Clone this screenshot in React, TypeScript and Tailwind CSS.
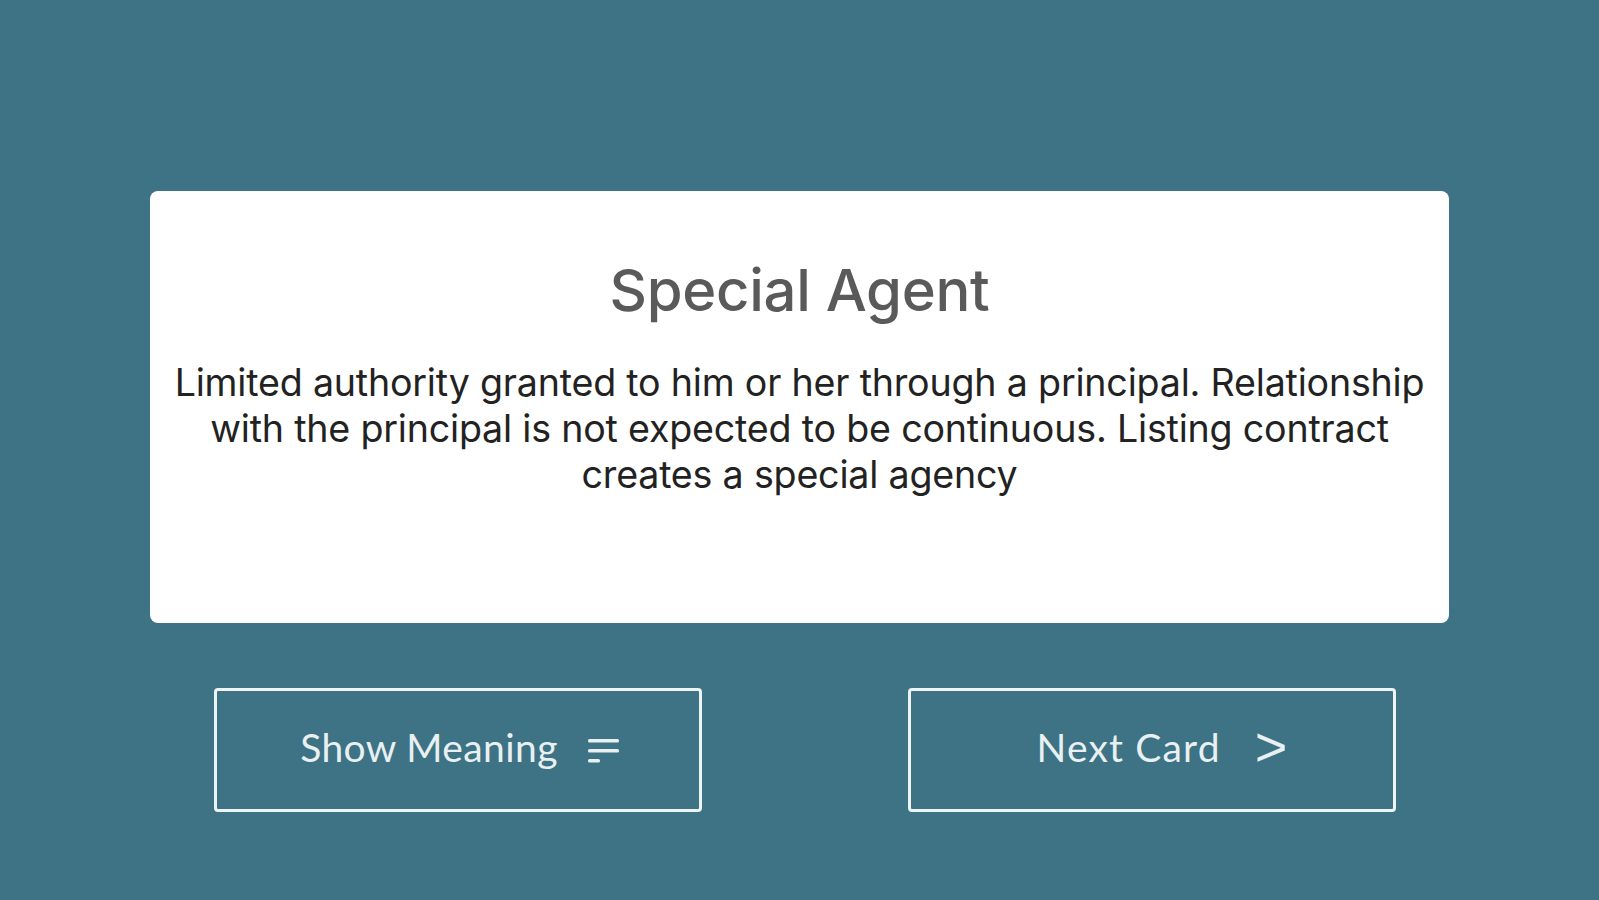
import React from "react";

export default function App() {
  return (
    <div className="min-h-screen w-full bg-[#3d7385] flex flex-col items-center pt-[191px]">
      <div className="w-[1299px] h-[432px] bg-white rounded-[8px] pt-[70px] px-[10px] text-center" style={{ fontFamily: "Inter, 'Liberation Sans', sans-serif" }}>
        <h1 className="text-[58px] leading-none text-[#5a5a5a] font-medium tracking-[-0.005em]">Special Agent</h1>
        <p className="mt-[41px] text-[37.6px] leading-[46px] text-[#222222] tracking-[-0.005em]">
          Limited authority granted to him or her through a principal. Relationship with the principal is not expected to be continuous. Listing contract creates a special agency
        </p>
      </div>
      <div className="w-[1299px] flex pl-[64px] gap-[206px] mt-[65px]" style={{ fontFamily: "Lato, 'Open Sans', sans-serif" }}>
        <button className="w-[488px] h-[124px] border-[3.5px] border-[#eef3f5] rounded-[4px] flex items-center justify-center text-[39px] text-[#e9f0f2] pb-[6px] pl-[4px]">
          <span className="tracking-[0.01em]">Show Meaning</span>
          <svg className="ml-[30px] mt-[10px]" width="32" height="26" viewBox="0 0 32 26">
            <rect x="0" y="0" width="31" height="3.5" rx="1.5" fill="#e9f0f2" />
            <rect x="0" y="10" width="31" height="3.5" rx="1.5" fill="#e9f0f2" />
            <rect x="0" y="20" width="12" height="3.5" rx="1.5" fill="#e9f0f2" />
          </svg>
        </button>
        <button className="w-[488px] h-[124px] border-[3.5px] border-[#eef3f5] rounded-[4px] flex items-center justify-center text-[39px] text-[#e9f0f2] pb-[6px] pl-[20px]">
          <span className="tracking-[0.03em]">Next Card</span>
          <span className="ml-[34px] text-[56px] leading-none" style={{ fontFamily: "'Liberation Sans', sans-serif" }}>&gt;</span>
        </button>
      </div>
    </div>
  );
}
